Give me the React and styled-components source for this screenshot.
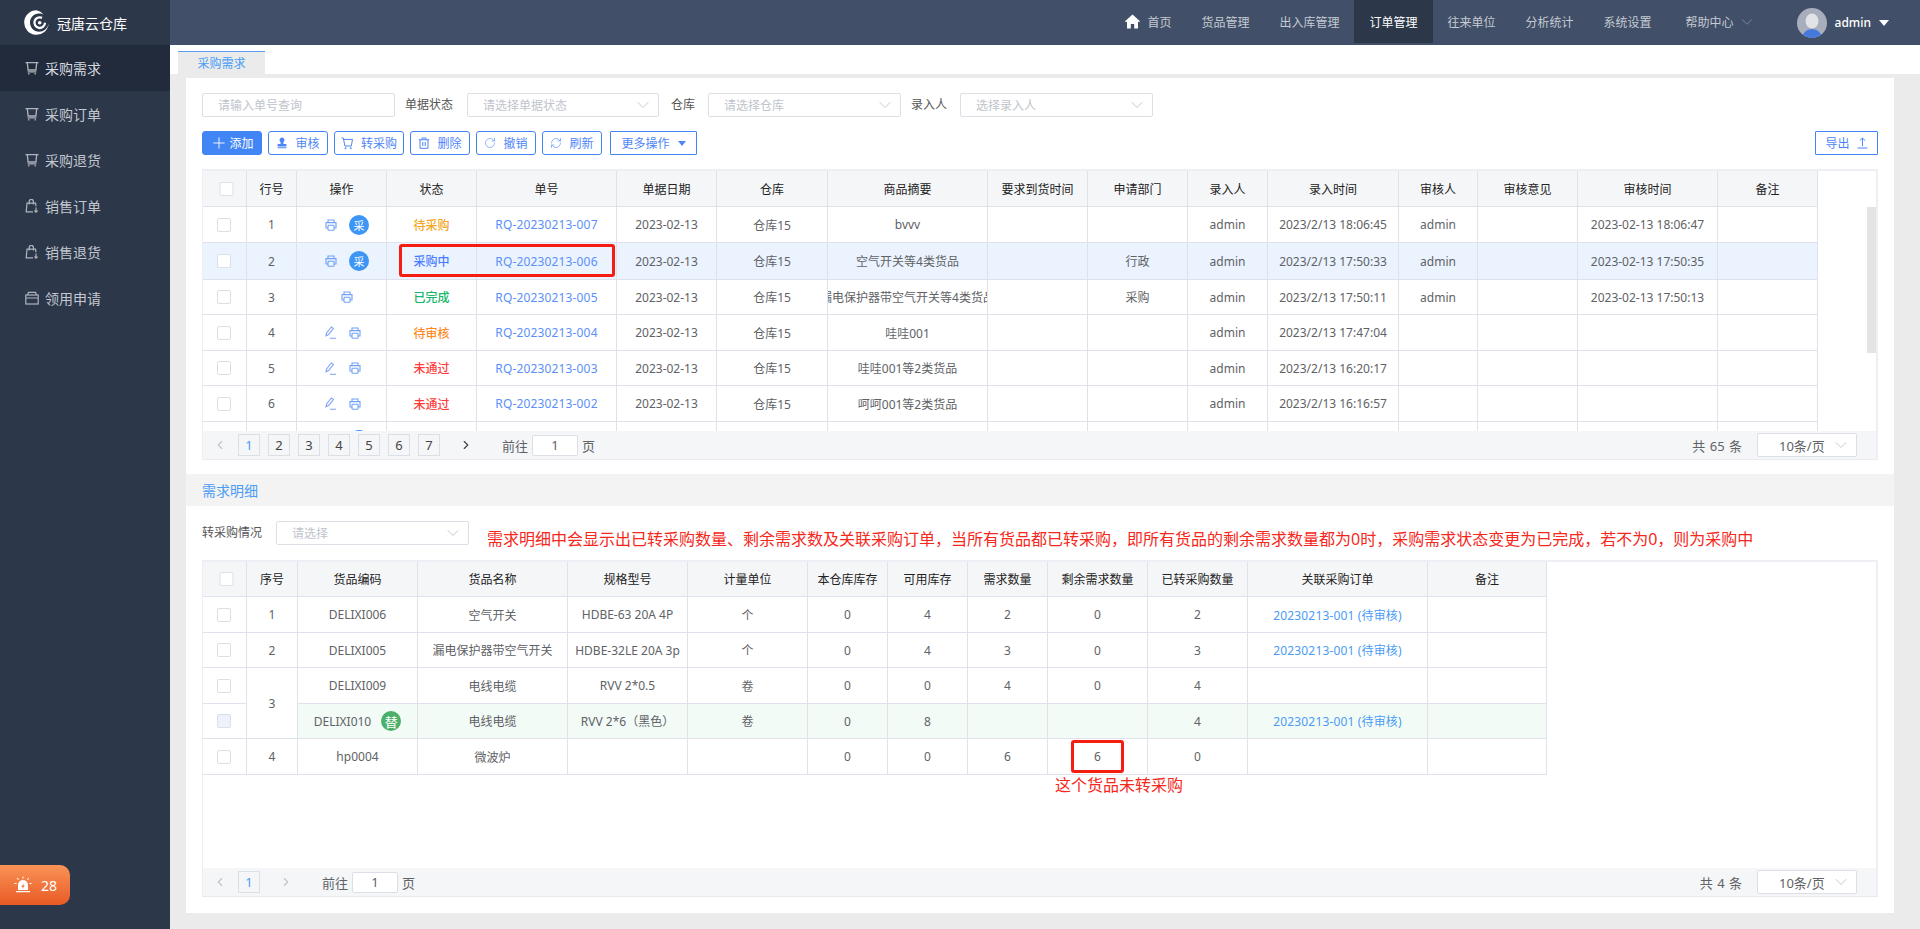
import React from 'react'
import styled, { createGlobalStyle } from 'styled-components'
import { Plus, ChevronDown, ChevronLeft, ChevronRight, RotateCw, RefreshCw } from 'lucide-react'

const blue = '#4285f4'
const line = '#dfe2ea'

const GlobalStyle = createGlobalStyle`
  html, body { margin: 0; padding: 0; height: 100%; overflow: hidden; }
  body { font-family: "Noto Sans", "Noto Sans CJK SC", sans-serif; font-size: 12px; color: #606266; }
  * { box-sizing: border-box; }
`

const Shell = styled.div`
  display: grid;
  grid-template-columns: 170px 1fr;
  width: 1920px;
  height: 929px;
  position: relative;
  background: #ebebeb;
`

const Sidebar = styled.aside`
  background: #2c3749;
  display: flex;
  flex-direction: column;
`

const Brand = styled.div`
  height: 45px;
  display: flex;
  align-items: center;
  gap: 8px;
  padding-left: 24px;
  color: #fff;
  font-size: 14px;
`

const MenuItem = styled.div`
  height: 46px;
  display: flex;
  align-items: center;
  gap: 6px;
  padding-left: 25px;
  font-size: 14px;
  color: ${p => (p.$active ? '#d5d9e0' : '#c2c7d0')};
  background: ${p => (p.$active ? '#222b3b' : 'transparent')};
  svg { flex: none; color: #aeb4bf; }
`

const AlarmPill = styled.div`
  position: absolute;
  left: 0;
  top: 865px;
  width: 70px;
  height: 40px;
  border-radius: 0 10px 10px 0;
  background: linear-gradient(#f99357, #e95a25);
  display: flex;
  align-items: center;
  gap: 9px;
  padding-left: 14px;
  color: #fff;
  font-size: 14px;
`

const Main = styled.main`
  display: flex;
  flex-direction: column;
  min-width: 0;
`

const Header = styled.header`
  height: 45px;
  background: #415068;
  display: flex;
  justify-content: flex-end;
  padding-right: 31px;
`

const NavItem = styled.div`
  height: 43px;
  padding: 0 15px;
  margin-left: ${p => p.$before || 0}px;
  display: flex;
  align-items: center;
  gap: ${p => p.$gap ?? 7}px;
  color: ${p => (p.$active ? '#fff' : '#c5cad3')};
  background: ${p => (p.$active ? '#2c3749' : 'transparent')};
`

const UserBox = styled.div`
  display: flex;
  align-items: center;
  margin-left: 26px;
  gap: 8px;
  color: #fff;
  font-weight: 500;
`

const Caret = styled.span`
  display: inline-block;
  width: 0;
  height: 0;
  border-left: ${p => p.$size || 4}px solid transparent;
  border-right: ${p => p.$size || 4}px solid transparent;
  border-top: ${p => (p.$size || 4) + 1}px solid ${p => p.$color || 'currentColor'};
`

const TabStrip = styled.div`
  height: 29px;
  background: #fff;
  padding: 6px 0 0 8px;
`

const Tab = styled.div`
  width: 87px;
  height: 23px;
  background: #ebebeb;
  border-top: 1px solid #5a9cf0;
  color: #4a9cf5;
  display: flex;
  align-items: center;
  justify-content: center;
`

const Content = styled.div`
  flex: 1;
  padding: 4px 26px 16px 16px;
  display: flex;
  flex-direction: column;
`

const Panel = styled.section`
  background: #fff;
  padding: 15px 16px 14px;
`

const Band = styled.div`
  height: 32px;
  background: #f3f3f3;
  padding-left: 16px;
  display: flex;
  align-items: center;
  color: #4a9cf5;
  font-size: 14px;
`

const DetailPanel = styled(Panel)`
  flex: 1;
  padding-bottom: 16px;
  display: flex;
  flex-direction: column;
`

const FilterRow = styled.div`
  display: flex;
  align-items: flex-start;
  height: 24px;
`

const FilterLabel = styled.label`
  line-height: 24px;
  margin: 0 ${p => p.$right ?? 13}px 0 ${p => p.$left ?? 10}px;
  color: #555;
`

const TextInput = styled.input`
  width: 193px;
  height: 24px;
  border: 1px solid #dcdfe6;
  border-radius: 2px;
  padding: 0 15px;
  font: inherit;
  outline: none;
  &::placeholder { color: #c0c4cc; }
`

const SelectBox = styled.div`
  width: ${p => p.$w || 192}px;
  height: 24px;
  border: 1px solid #dcdfe6;
  border-radius: 2px;
  padding: 0 5px 0 15px;
  display: flex;
  align-items: center;
  justify-content: space-between;
  color: ${p => (p.$filled ? '#606266' : '#c0c4cc')};
  background: #fff;
  flex: none;
  svg { color: #c0c4cc; }
`

const NoteText = styled.p`
  margin: 7px 0 0 18px;
  font-size: 16px;
  line-height: 22px;
  color: #f5281c;
  white-space: nowrap;
`

const ActionRow = styled.div`
  display: flex;
  gap: 6px;
  margin: 14px 0;
  height: 24px;
`

const ActionButton = styled.button`
  width: ${p => p.$w || 60}px;
  height: 24px;
  padding: 0;
  border: 1px solid ${blue};
  border-radius: ${p => (p.$square ? 1 : 3)}px;
  background: ${p => (p.$primary ? blue : '#fff')};
  color: ${p => (p.$primary ? '#fff' : '#4f86f7')};
  font: inherit;
  display: flex;
  align-items: center;
  justify-content: center;
  gap: ${p => p.$gap ?? 7}px;
  margin-left: ${p => (p.$push ? 'auto' : `${p.$offset || 0}px`)};
`

const TableFrame = styled.div`
  position: relative;
  margin-top: ${p => p.$top || 0}px;
  border-top: 2px solid #edeff5;
  border-left: 1px solid #edeff5;
  border-right: 2px solid #edeff5;
  border-bottom: 1px solid #e8eaf0;
`

const TableBody = styled.div`
  height: ${p => p.$h}px;
  overflow: hidden;
`

const Table = styled.table`
  table-layout: fixed;
  border-collapse: separate;
  border-spacing: 0;
  width: ${p => p.$w}px;
`

const Th = styled.th`
  height: ${p => p.$h}px;
  padding: 0;
  background: #f5f6f8;
  border-right: 1px solid ${line};
  border-bottom: 1px solid ${line};
  font-weight: 400;
  color: #222;
`

const Row = styled.tr`
  td { height: ${p => p.$h}px; }
  background: ${p => (p.$selected ? '#ebf3fe' : 'transparent')};
`

const Td = styled.td`
  padding: 0;
  text-align: center;
  border-right: 1px solid ${line};
  border-bottom: 1px solid ${line};
  background: ${p => (p.$tint ? '#f3fbf6' : 'transparent')};
`

const CellClip = styled.div`
  display: flex;
  justify-content: center;
  align-items: center;
  gap: ${p => p.$gap || 0}px;
  padding-left: ${p => p.$pad || 0}px;
  white-space: nowrap;
  overflow: hidden;
`

const Check = styled.span`
  display: block;
  width: 14px;
  height: 14px;
  border: 1px solid #dcdfe6;
  border-radius: 2px;
  background: ${p => (p.$disabled ? '#edf2fc' : '#fff')};
  margin: 0 auto;
  transform: translateX(${p => (p.$head ? 1.5 : -1)}px);
`

const Status = styled.span`
  font-weight: 500;
  color: ${p => p.$color};
`

const Link = styled.span`
  color: ${p => p.$color || '#5b8ff9'};
  letter-spacing: 0.15px;
`

const Badge = styled.span`
  width: 20px;
  height: 20px;
  border-radius: 50%;
  flex: none;
  display: inline-flex;
  align-items: center;
  justify-content: center;
  color: #fff;
  font-size: ${p => p.$size || 11}px;
  background: ${p => p.$color};
`

const Pager = styled.div`
  height: 28px;
  background: #f5f6f8;
  display: flex;
  align-items: center;
  padding: 0 19px 0 6px;
  font-size: 13px;
  color: #606266;
`

const PageArrow = styled.span`
  width: 22px;
  display: flex;
  justify-content: center;
  margin: ${p => (p.$next ? '0 25px 0 7px' : '0 7px 0 0')};
  color: ${p => (p.$off ? '#c0c4cc' : '#444')};
`

const PageNum = styled.span`
  width: 22px;
  height: 22px;
  border: 1px solid #dcdfe6;
  margin-right: 8px;
  display: flex;
  align-items: center;
  justify-content: center;
  color: ${p => (p.$active ? '#4a9cf5' : '#444')};
`

const JumpInput = styled.span`
  width: 46px;
  height: 21px;
  margin: 0 4px;
  border: 1px solid #dcdfe6;
  border-radius: 2px;
  background: #fff;
  display: flex;
  align-items: center;
  justify-content: center;
`

const Total = styled.span`
  margin-left: auto;
  margin-right: 15px;
  word-spacing: 1px;
`

const PageSize = styled.span`
  margin-left: 6px;
`

const ScrollThumb = styled.div`
  position: absolute;
  right: 0;
  top: 36px;
  width: 9px;
  height: 146px;
  background: #e4e4e4;
`

const RedBox = styled.div`
  position: absolute;
  left: ${p => p.$x}px;
  top: ${p => p.$y}px;
  width: ${p => p.$w}px;
  height: ${p => p.$h}px;
  border: 3px solid #f51c10;
  border-radius: 3px;
`

const RedLabel = styled.span`
  position: absolute;
  left: 852px;
  top: 210px;
  font-size: 16px;
  color: #f5281c;
  white-space: nowrap;
`

// drawn icons
const CartIcon = () => (
  <svg width="14" height="14" viewBox="0 0 14 14" fill="none" stroke="currentColor" strokeWidth="1.3">
    <path d="M0.5 1.6h13M2.3 1.6l.8 7.4h7.8l.8-7.4M2.6 10.8h8.8" />
    <path d="M3.8 12v1.6M10.2 12v1.6" />
  </svg>
)

const BagIcon = () => (
  <svg width="14" height="14" viewBox="0 0 14 14" fill="none" stroke="currentColor" strokeWidth="1.2">
    <path d="M8 12.8H1.2L2 4.2h8.6l.3 3" />
    <path d="M4.2 5.6V2.4a2 2 0 0 1 4.2 0v3.2" />
    <path d="M11 8.6v4.4M9.4 11.6l1.6 1.6 1.6-1.6" />
  </svg>
)

const CaseIcon = () => (
  <svg width="14" height="14" viewBox="0 0 14 14" fill="none" stroke="currentColor" strokeWidth="1.2">
    <rect x="0.8" y="4" width="12.4" height="9" />
    <path d="M2.6 4l.8-2.600h7.200l.8 2.600M0.800 7h12.400" />
  </svg>
)

const Logo = () => (
  <svg width="25" height="25" viewBox="0 0 25 25">
    <path fill="#fff" fillRule="evenodd" d="M12.5.2a12.3 12.3 0 1 0 12.2 13.6 10 10 0 0 1-9.6 8C9.7 21.8 6 17.6 6 12.6S9.8 3.4 15 3.4c1.700 0 3.300.5 4.700 1.300A12.200 12.200 0 0 0 12.500.2z" />
    <path fill="none" stroke="#fff" strokeWidth="2.300" d="M21 12.700a5.300 5.300 0 1 1-3-4.800" />
    <circle cx="15.700" cy="12.700" r="1.800" fill="#fff" />
  </svg>
)

const HomeIcon = () => (
  <svg width="15" height="15" viewBox="0 0 15 15" fill="#fff">
    <path d="M7.500.4L0 7.300l1 1 1-.9V14.600h3.800v-4.600h3.400v4.600H13V7.400l1 .9 1-1z" />
  </svg>
)

const Avatar = () => (
  <svg width="30" height="30" viewBox="0 0 30 30">
    <defs>
      <clipPath id="avatar-clip"><circle cx="15" cy="15" r="15" /></clipPath>
    </defs>
    <g clipPath="url(#avatar-clip)">
      <rect width="30" height="30" fill="#a9aebc" />
      <ellipse cx="15" cy="13" rx="6.500" ry="7.500" fill="#e2e3e6" />
      <ellipse cx="15" cy="30" rx="10" ry="9" fill="#4679dc" />
    </g>
  </svg>
)

const StampIcon = () => (
  <svg width="12" height="12" viewBox="0 0 12 12" fill="currentColor">
    <path d="M6 .6a2.500 2.500 0 0 0-1.600 4.400c.4.400.4 1.500-.1 2H1.600v2.400h8.800V7H7.700c-.5-.5-.5-1.600-.1-2A2.500 2.500 0 0 0 6 .6zM1.600 10.200h8.800v1H1.600z" />
  </svg>
)

const LightCartIcon = () => (
  <svg width="13" height="13" viewBox="0 0 13 13" fill="none" stroke="currentColor" strokeWidth="1">
    <path d="M.5 1h1.800l1.600 8h6.400l1.200-6.600H2.600" />
    <circle cx="4.500" cy="11.200" r=".6" />
    <circle cx="9.800" cy="11.200" r=".6" />
  </svg>
)

const TrashIcon = () => (
  <svg width="12" height="12" viewBox="0 0 12 12" fill="none" stroke="currentColor" strokeWidth="1">
    <path d="M.8 2.800h10.400M4 2.800V1h4v1.800M2 2.800v8.500h8V2.800M4.800 5v4M7.200 5v4" />
  </svg>
)

const ExportIcon = () => (
  <svg width="11" height="12" viewBox="0 0 11 12" fill="none" stroke="currentColor" strokeWidth="1">
    <path d="M5.500 9V1M2.800 3.700L5.500 1l2.700 2.700M.5 11h10" />
  </svg>
)

const PrintIcon = () => (
  <svg width="12" height="12" viewBox="0 0 12 12" fill="none" stroke="#6fa1f7" strokeWidth="1.100">
    <path d="M3 3.600V1h6v2.600M3 9H1V3.600h10V9H9" />
    <rect x="3" y="6.300" width="6" height="5" rx=".6" />
  </svg>
)

const PenIcon = () => (
  <svg width="11" height="13" viewBox="0 0 11 13" fill="none" stroke="#7fa2f5" strokeWidth="1.100">
    <path d="M1 9.800l.6-2.800L6.400 1l2 1.600-4.800 6zM4.800 12.300H11" />
  </svg>
)

const AlarmIcon = () => (
  <svg width="18" height="18" viewBox="0 0 18 18" fill="#fff">
    <path d="M4 14V9a5 5 0 0 1 10 0v5zM2 15h14v1.200H2z" />
    <path d="M9.600 7.400L7.300 10.800h1.500l-.5 2.200 2.400-3.500H9.200z" fill="#ee6a33" />
    <path d="M8.500.6h1v2.200h-1zM2.700 2.500l.8-.7 1.500 1.600-.7.700zM14.500 1.800l.8.700-1.600 1.600-.7-.7zM.4 7h2.200v1H.4zM15.400 7h2.200v1h-2.200z" />
  </svg>
)

const Chevron = () => <ChevronDown size={20} strokeWidth={1.1} />

const menu = [
  { label: '采购需求', Icon: CartIcon, active: true },
  { label: '采购订单', Icon: CartIcon },
  { label: '采购退货', Icon: CartIcon },
  { label: '销售订单', Icon: BagIcon },
  { label: '销售退货', Icon: BagIcon },
  { label: '领用申请', Icon: CaseIcon }
]

const navItems = ['货品管理', '出入库管理', '订单管理', '往来单位', '分析统计', '系统设置']

const orderCols = [44, 50, 90, 90, 140, 100, 111, 160, 100, 100, 80, 131, 79, 100, 140, 100]
const orderHead = ['行号', '操作', '状态', '单号', '单据日期', '仓库', '商品摘要', '要求到货时间', '申请部门', '录入人', '录入时间', '审核人', '审核意见', '审核时间', '备注']

const statusColors = {
  待采购: '#f5a623',
  采购中: '#4a7dff',
  已完成: '#16b86b',
  待审核: '#ff8a1f',
  未通过: '#ff3b3b'
}

const orders = [
  { no: 1, h: 36, tools: 'buy', status: '待采购', code: 'RQ-20230213-007', goods: 'bvvv', dept: '', entered: '2023/2/13 18:06:45', checker: 'admin', checked: '2023-02-13 18:06:47' },
  { no: 2, h: 37, tools: 'buy', status: '采购中', code: 'RQ-20230213-006', goods: '空气开关等4类货品', dept: '行政', entered: '2023/2/13 17:50:33', checker: 'admin', checked: '2023-02-13 17:50:35', selected: true },
  { no: 3, h: 35, tools: 'print', status: '已完成', code: 'RQ-20230213-005', goods: '漏电保护器带空气开关等4类货品', dept: '采购', entered: '2023/2/13 17:50:11', checker: 'admin', checked: '2023-02-13 17:50:13' },
  { no: 4, h: 36, tools: 'edit', status: '待审核', code: 'RQ-20230213-004', goods: '哇哇001', dept: '', entered: '2023/2/13 17:47:04', checker: '', checked: '' },
  { no: 5, h: 35, tools: 'edit', status: '未通过', code: 'RQ-20230213-003', goods: '哇哇001等2类货品', dept: '', entered: '2023/2/13 16:20:17', checker: '', checked: '' },
  { no: 6, h: 36, tools: 'edit', status: '未通过', code: 'RQ-20230213-002', goods: '呵呵001等2类货品', dept: '', entered: '2023/2/13 16:16:57', checker: '', checked: '' }
]

const detailCols = [44, 51, 120, 150, 120, 120, 80, 80, 80, 100, 100, 180, 119]
const detailHead = ['序号', '货品编码', '货品名称', '规格型号', '计量单位', '本仓库库存', '可用库存', '需求数量', '剩余需求数量', '已转采购数量', '关联采购订单', '备注']

const LINKED = '20230213-001 (待审核)'

const details = [
  { seq: 1, h: 36, code: 'DELIXI006', name: '空气开关', spec: 'HDBE-63 20A 4P', unit: '个', stock: 0, free: 4, need: 2, left: 0, moved: 2, linked: LINKED },
  { seq: 2, h: 35, code: 'DELIXI005', name: '漏电保护器带空气开关', spec: 'HDBE-32LE 20A 3p', unit: '个', stock: 0, free: 4, need: 3, left: 0, moved: 3, linked: LINKED },
  { seq: 3, h: 36, span: 2, code: 'DELIXI009', name: '电线电缆', spec: 'RVV 2*0.5', unit: '卷', stock: 0, free: 0, need: 4, left: 0, moved: 4, linked: '' },
  { h: 35, code: 'DELIXI010', swap: true, name: '电线电缆', spec: 'RVV 2*6（黑色）', unit: '卷', stock: 0, free: 8, need: '', left: '', moved: 4, linked: LINKED },
  { seq: 4, h: 36, code: 'hp0004', name: '微波炉', spec: '', unit: '', stock: 0, free: 0, need: 6, left: 6, moved: 0, linked: '' }
]

const OrderTools = ({ kind }) => (
  <CellClip $gap={kind === 'buy' ? 12 : 13} $pad={kind === 'edit' ? 2 : 11}>
    {kind === 'edit' && <PenIcon />}
    <PrintIcon />
    {kind === 'buy' && <Badge $color="#3d96f5">采</Badge>}
  </CellClip>
)

const OrderRow = ({ order }) => (
  <Row $h={order.h} $selected={order.selected}>
    <Td><Check /></Td>
    <Td>{order.no}</Td>
    <Td><OrderTools kind={order.tools} /></Td>
    <Td><Status $color={statusColors[order.status]}>{order.status}</Status></Td>
    <Td><Link>{order.code}</Link></Td>
    <Td>2023-02-13</Td>
    <Td>仓库15</Td>
    <Td><CellClip>{order.goods}</CellClip></Td>
    <Td />
    <Td>{order.dept}</Td>
    <Td>admin</Td>
    <Td>{order.entered}</Td>
    <Td>{order.checker}</Td>
    <Td />
    <Td>{order.checked}</Td>
    <Td />
  </Row>
)

// only the top of the next row shows above the pager: the round badge edge
const PeekRow = () => (
  <Row $h={36}>
    <Td />
    <Td />
    <Td>
      <CellClip $gap={12} $pad={11}>
        <PrintIcon />
        <Badge $color="#3d96f5" />
      </CellClip>
    </Td>
    {orderHead.slice(2).map(h => <Td key={h} />)}
  </Row>
)

const DetailRow = ({ item }) => {
  const tint = item.swap
  return (
    <Row $h={item.h}>
      <Td><Check $disabled={item.swap} /></Td>
      {item.seq && <Td rowSpan={item.span || 1}>{item.seq}</Td>}
      <Td $tint={tint}>
        <CellClip $gap={10}>
          {item.code}
          {item.swap && <Badge $color="#4caf6a" $size={13}>替</Badge>}
        </CellClip>
      </Td>
      <Td $tint={tint}>{item.name}</Td>
      <Td $tint={tint}>{item.spec}</Td>
      <Td $tint={tint}>{item.unit}</Td>
      <Td $tint={tint}>{item.stock}</Td>
      <Td $tint={tint}>{item.free}</Td>
      <Td $tint={tint}>{item.need}</Td>
      <Td $tint={tint}>{item.left}</Td>
      <Td $tint={tint}>{item.moved}</Td>
      <Td $tint={tint}><Link $color="#4a9cf5">{item.linked}</Link></Td>
      <Td $tint={tint} />
    </Row>
  )
}

const Pagination = ({ pages, total, lastOff }) => (
  <Pager>
    <PageArrow $off><ChevronLeft size={14} /></PageArrow>
    {pages.map(n => <PageNum key={n} $active={n === 1}>{n}</PageNum>)}
    <PageArrow $next $off={lastOff}><ChevronRight size={14} /></PageArrow>
    前往
    <JumpInput>1</JumpInput>
    页
    <Total>共 {total} 条</Total>
    <SelectBox $w={100} $filled>
      <PageSize>10条/页</PageSize>
      <Chevron />
    </SelectBox>
  </Pager>
)

const App = () => (
  <Shell>
    <GlobalStyle />
    <Sidebar>
      <Brand><Logo />冠唐云仓库</Brand>
      {menu.map(({ label, Icon, active }) => (
        <MenuItem key={label} $active={active}><Icon />{label}</MenuItem>
      ))}
    </Sidebar>
    <AlarmPill><AlarmIcon />28</AlarmPill>
    <Main>
      <Header>
        <NavItem><HomeIcon />首页</NavItem>
        {navItems.map(item => (
          <NavItem key={item} $active={item === '订单管理'}>{item}</NavItem>
        ))}
        <NavItem $before={4} $gap={4}>帮助中心<ChevronDown size={18} strokeWidth={1} color="#8d97a8" /></NavItem>
        <UserBox><Avatar />admin<Caret $size={5} /></UserBox>
      </Header>
      <TabStrip><Tab>采购需求</Tab></TabStrip>
      <Content>
        <Panel>
          <FilterRow>
            <TextInput placeholder="请输入单号查询" />
            <FilterLabel $right={14}>单据状态</FilterLabel>
            <SelectBox>请选择单据状态<Chevron /></SelectBox>
            <FilterLabel $left={12}>仓库</FilterLabel>
            <SelectBox $w={193}>请选择仓库<Chevron /></SelectBox>
            <FilterLabel>录入人</FilterLabel>
            <SelectBox $w={193}>选择录入人<Chevron /></SelectBox>
          </FilterRow>
          <ActionRow>
            <ActionButton $primary $gap={1}><Plus size={18} strokeWidth={1.2} />添加</ActionButton>
            <ActionButton><StampIcon />审核</ActionButton>
            <ActionButton $w={70}><LightCartIcon />转采购</ActionButton>
            <ActionButton><TrashIcon />删除</ActionButton>
            <ActionButton><RotateCw size={12} strokeWidth={1.2} />撤销</ActionButton>
            <ActionButton><RefreshCw size={12} strokeWidth={1.2} />刷新</ActionButton>
            <ActionButton $w={87} $square $gap={8} $offset={2}>更多操作<Caret /></ActionButton>
            <ActionButton $w={63} $square $push>导出<ExportIcon /></ActionButton>
          </ActionRow>
          <TableFrame>
            <TableBody $h={260}>
              <Table $w={1615}>
                <colgroup>{orderCols.map((w, i) => <col key={i} width={w} />)}</colgroup>
                <thead>
                  <tr>
                    <Th $h={36}><Check $head /></Th>
                    {orderHead.map(h => <Th key={h} $h={36}>{h}</Th>)}
                  </tr>
                </thead>
                <tbody>
                  {orders.map(order => <OrderRow key={order.no} order={order} />)}
                  <PeekRow />
                </tbody>
              </Table>
            </TableBody>
            <Pagination pages={[1, 2, 3, 4, 5, 6, 7]} total={65} />
            <ScrollThumb />
            <RedBox $x={196} $y={73} $w={216} $h={33} />
          </TableFrame>
        </Panel>
        <Band>需求明细</Band>
        <DetailPanel>
          <FilterRow>
            <FilterLabel $left={0} $right={14}>转采购情况</FilterLabel>
            <SelectBox $w={193}>请选择<Chevron /></SelectBox>
            <NoteText>需求明细中会显示出已转采购数量、剩余需求数及关联采购订单，当所有货品都已转采购，即所有货品的剩余需求数量都为0时，采购需求状态变更为已完成，若不为0，则为采购中</NoteText>
          </FilterRow>
          <TableFrame $top={15}>
            <TableBody $h={306}>
              <Table $w={1344}>
                <colgroup>{detailCols.map((w, i) => <col key={i} width={w} />)}</colgroup>
                <thead>
                  <tr>
                    <Th $h={35}><Check $head /></Th>
                    {detailHead.map(h => <Th key={h} $h={35}>{h}</Th>)}
                  </tr>
                </thead>
                <tbody>
                  {details.map(item => <DetailRow key={item.code} item={item} />)}
                </tbody>
              </Table>
            </TableBody>
            <Pagination pages={[1]} total={4} lastOff />
            <RedBox $x={868} $y={178} $w={53} $h={33} />
            <RedLabel>这个货品未转采购</RedLabel>
          </TableFrame>
        </DetailPanel>
      </Content>
    </Main>
  </Shell>
)

export default App
